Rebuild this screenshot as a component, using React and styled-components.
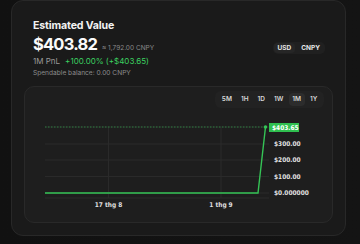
import React, { useState } from "react";
import styled, { createGlobalStyle } from "styled-components";

const GlobalStyle = createGlobalStyle`
  html, body {
    margin: 0;
    padding: 0;
    background: #121212;
    font-family: Inter, "Noto Sans", sans-serif;
    -webkit-font-smoothing: antialiased;
  }
`;

const Page = styled.div`
  width: 360px;
  height: 244px;
  padding: 0 14px 0 11px;
  box-sizing: border-box;
  background: linear-gradient(90deg, #111 0%, #141414 100%);
`;

const Card = styled.div`
  height: 236px;
  box-sizing: border-box;
  background: #1a1a1a;
  border: 1px solid #282828;
  border-radius: 12px;
  padding: 18px 12px 12px;
  display: flex;
  flex-direction: column;
`;

const Header = styled.div`
  display: flex;
  justify-content: space-between;
  align-items: flex-start;
  padding: 0 8px 0 9px;
`;

const Summary = styled.div`
  display: flex;
  flex-direction: column;
`;

const Title = styled.div`
  font-size: 10.6px;
  line-height: 14px;
  font-weight: 700;
  letter-spacing: -0.15px;
  color: #f2f2f2;
`;

const ValueRow = styled.div`
  display: flex;
  align-items: baseline;
  gap: 5px;
`;

const Value = styled.div`
  font-size: 16.5px;
  line-height: 22px;
  font-weight: 700;
  color: #fafafa;
  letter-spacing: -0.8px;
`;

const Approx = styled.span`
  font-size: 6.5px;
  color: #8a8a8a;
`;

const PnlRow = styled.div`
  display: flex;
  gap: 5px;
  font-size: 8px;
  line-height: 12px;
`;

const PnlLabel = styled.span`
  color: #9a9a9a;
`;

const PnlValue = styled.span`
  color: #3bd060;
`;

const Spendable = styled.div`
  font-size: 6.6px;
  line-height: 10px;
  margin-top: 1px;
  color: #8c8c8c;
`;

const Toggle = styled.div`
  display: flex;
  gap: 2px;
  margin-top: 23px;
  padding: 1px;
  background: #202020;
  border-radius: 5px;
`;

const ToggleBtn = styled.button`
  border: none;
  font-family: inherit;
  font-size: 6.5px;
  font-weight: 700;
  line-height: 10px;
  padding: 0 4px;
  border-radius: 4px;
  color: #e6e6e6;
  background: ${(p) => (p.$active ? "#262626" : "transparent")};
  cursor: pointer;
`;

const ChartCard = styled.div`
  margin-top: 8px;
  flex: 1;
  background: #1e1e1e;
  border: 1px solid #292929;
  border-radius: 10px;
  padding: 4px 0 0;
  display: flex;
  flex-direction: column;
`;

const Tabs = styled.div`
  align-self: flex-end;
  margin-right: 8px;
  display: flex;
  gap: 2px;
  padding: 2px 3px;
  background: #222;
  border-radius: 6px;
`;

const Tab = styled.button`
  border: none;
  font-family: inherit;
  font-size: 6.5px;
  font-weight: 600;
  line-height: 13px;
  padding: 0 3.5px;
  border-radius: 4px;
  color: #d8d8d8;
  background: ${(p) => (p.$active ? "#2c2c2c" : "transparent")};
  cursor: pointer;
`;

const ChartSvg = styled.svg`
  display: block;
  margin-top: 5px;
`;

const AxisText = styled.text`
  font-family: "DejaVu Sans Condensed", "Liberation Sans", sans-serif;
  font-size: 6.5px;
  font-weight: 600;
`;

const GREEN = "#35c456";
const GRID = "#2a2a2a";

const gridY = [14, 31, 47, 63.5, 80, 85];
const yLabels = [
  { y: 31, t: "$300.00" },
  { y: 47, t: "$200.00" },
  { y: 63.5, t: "$100.00" },
  { y: 80, t: "$0.000000" },
];

const Chart = () => (
  <ChartSvg width="308" height="100" viewBox="0 0 308 100">
    {gridY.map((y) => (
      <line key={y} x1="20" x2="244" y1={y} y2={y} stroke={GRID} strokeWidth="1" />
    ))}
    <line x1="83.5" x2="83.5" y1="14" y2="85" stroke={GRID} />
    <line x1="196" x2="196" y1="14" y2="85" stroke={GRID} />
    <line x1="20" x2="240" y1="14" y2="14" stroke={GREEN} strokeWidth="0.8" strokeDasharray="1.5 1.5" opacity="0.7" />
    <polyline
      points="20,80 233,80 240.5,14"
      fill="none"
      stroke={GREEN}
      strokeWidth="1.4"
    />
    <circle cx="240.5" cy="14" r="1.8" fill={GREEN} />
    <rect x="244" y="10" width="30" height="9" fill="#2fbf4f" />
    <AxisText x="247" y="16.8" fill="#fff">$403.65</AxisText>
    {yLabels.map((l) => (
      <AxisText key={l.t} x="249" y={l.y + 2.3} fill="#e0e0e0">
        {l.t}
      </AxisText>
    ))}
    <AxisText x="83.5" y="93.5" fill="#e0e0e0" textAnchor="middle">17 thg 8</AxisText>
    <AxisText x="196" y="93.5" fill="#e0e0e0" textAnchor="middle">1 thg 9</AxisText>
  </ChartSvg>
);

export default function App() {
  const [currency, setCurrency] = useState("USD");
  const [range, setRange] = useState("1M");

  return (
    <>
      <GlobalStyle />
      <Page>
        <Card>
          <Header>
            <Summary>
              <Title>Estimated Value</Title>
              <ValueRow>
                <Value>$403.82</Value>
                <Approx>≈ 1,792.00 CNPY</Approx>
              </ValueRow>
              <PnlRow>
                <PnlLabel>1M PnL</PnlLabel>
                <PnlValue>+100.00% (+$403.65)</PnlValue>
              </PnlRow>
              <Spendable>Spendable balance: 0.00 CNPY</Spendable>
            </Summary>
            <Toggle>
              {["USD", "CNPY"].map((c) => (
                <ToggleBtn key={c} $active={currency === c} onClick={() => setCurrency(c)}>
                  {c}
                </ToggleBtn>
              ))}
            </Toggle>
          </Header>
          <ChartCard>
            <Tabs>
              {["5M", "1H", "1D", "1W", "1M", "1Y"].map((r) => (
                <Tab key={r} $active={range === r} onClick={() => setRange(r)}>
                  {r}
                </Tab>
              ))}
            </Tabs>
            <Chart />
          </ChartCard>
        </Card>
      </Page>
    </>
  );
}
